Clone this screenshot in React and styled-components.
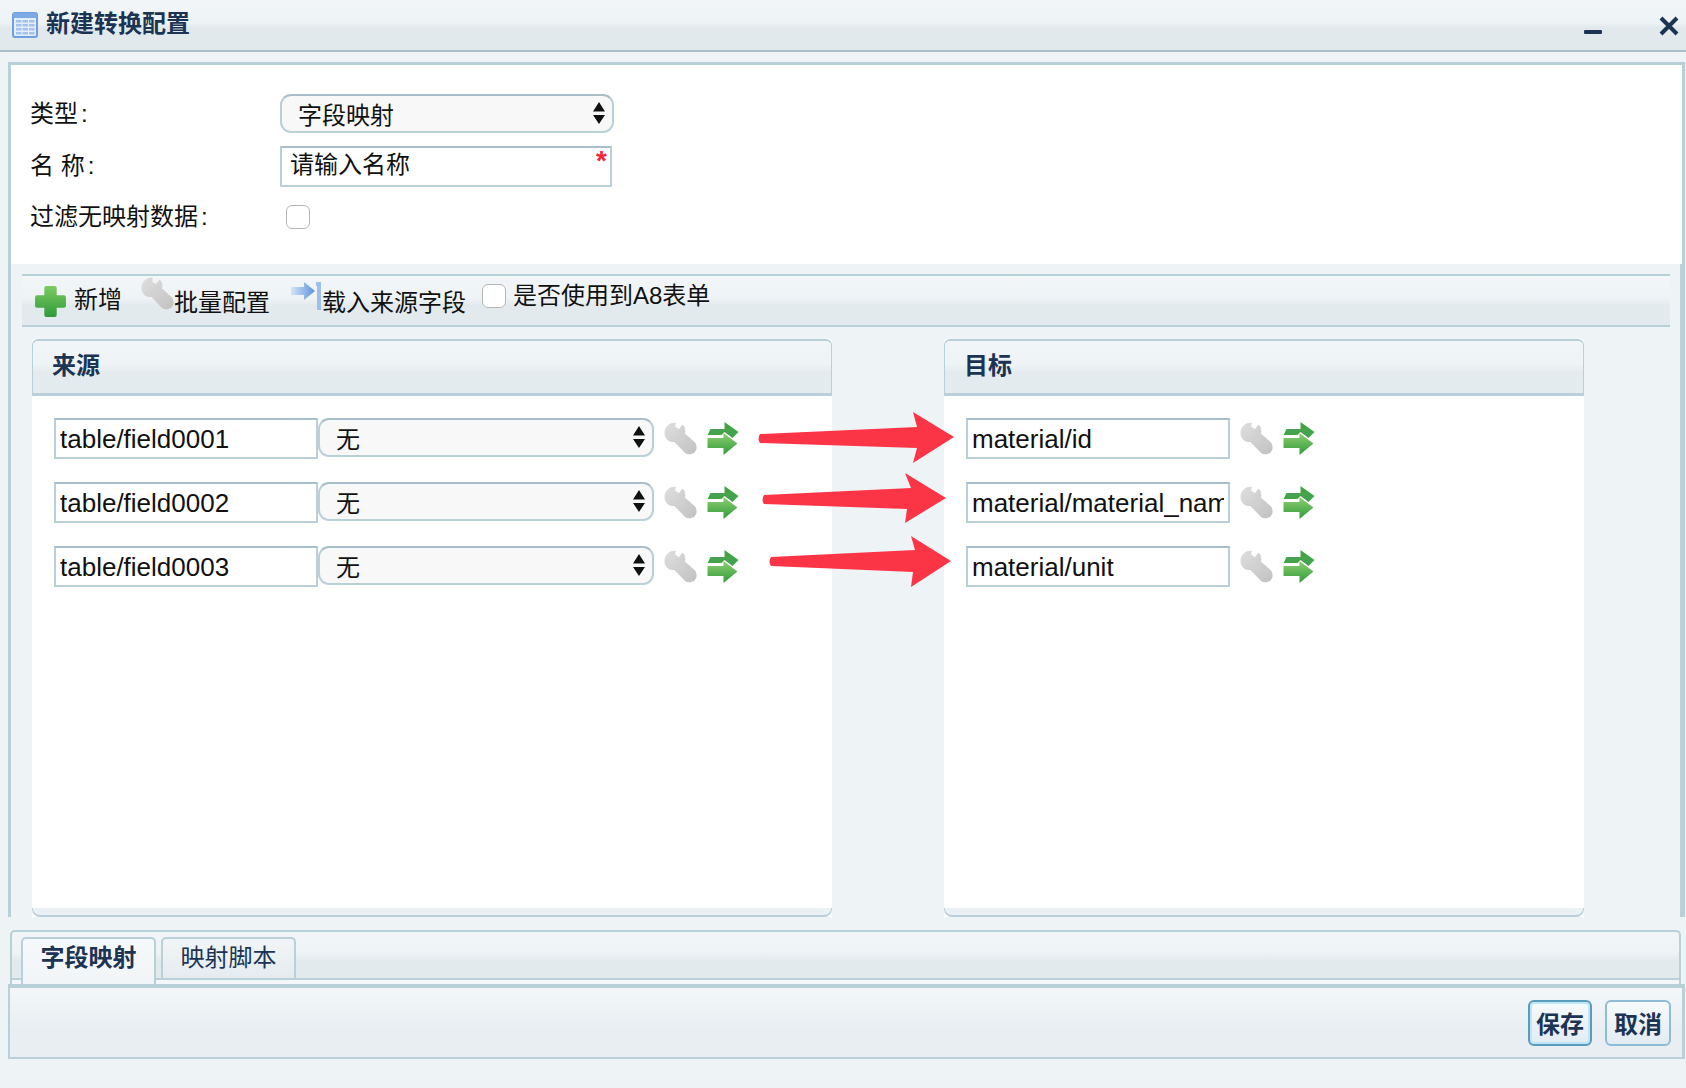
import styled, { createGlobalStyle } from 'styled-components';

const GlobalStyle = createGlobalStyle`
  html, body { margin: 0; padding: 0; background: #eef3f6; }
  * { box-sizing: border-box; }
`;

const FONT = `"Liberation Sans", "Noto Sans CJK SC", sans-serif`;
const LINE = '#b9d0d8';
const NAVY = '#1c3454';

const Window = styled.div`
  position: relative;
  width: 1686px;
  height: 1088px;
  overflow: hidden;
  background: #eef3f6;
  font-family: ${FONT};
  font-size: 24px;
  color: #111;
  display: flex;
  flex-direction: column;
`;

const TitleBar = styled.div`
  height: 52px;
  flex: none;
  display: flex;
  align-items: center;
  padding: 0 7px 0 12px;
  background: linear-gradient(#f1f5f7 0%, #eef3f5 45%, #e2e9ec 55%, #e2e9ec 100%);
  border-bottom: 2px solid #a8bfc8;
`;

const TitleText = styled.div`
  margin: 0 0 8px 8px;
  font-weight: 700;
  color: ${NAVY};
  flex: 1;
`;

const WinButton = styled.svg`
  display: block;
  flex: none;
  margin-top: 2px;
  margin-left: ${(p) => p.$gap}px;
`;

const Upper = styled.div`
  margin: 10px 1px 0 8px;
  height: 855px;
  flex: none;
  border: 3px solid ${LINE};
  border-bottom: 0;
  border-right-width: 3px;
  display: flex;
  flex-direction: column;
`;

const Form = styled.div`
  height: 199px;
  flex: none;
  background: #fff;
  padding: 29px 0 0 19px;
  display: grid;
  grid-template-columns: 250px 1fr;
  grid-template-rows: 39px 41px 33px;
  row-gap: 13px;
  align-items: center;
`;

const FormLabel = styled.div`
  line-height: 32px;
  margin-bottom: ${(p) => p.$up || 0}px;
`;

const Colon = styled.span`
  margin-left: 3px;
`;

const Dropdown = styled.div`
  width: ${(p) => p.$w}px;
  height: 39px;
  flex: none;
  display: flex;
  align-items: center;
  justify-content: space-between;
  padding: 0 7px 1px 16px;
  background: #f8f8f8;
  border: 2px solid ${LINE};
  border-top-color: #a9bec8;
  border-radius: 11px;
`;

const NameField = styled.div`
  position: relative;
  width: 332px;
  height: 41px;
  display: flex;
  align-items: center;
  padding: 0 8px 8px;
  background: #fff;
  border: 2px solid ${LINE};
  border-top-color: #a9bec8;
`;

const Required = styled.span`
  position: absolute;
  top: 1px;
  right: 3px;
  color: #f0283c;
  font-size: 28px;
  font-weight: 700;
  line-height: 24px;
`;

const CheckBox = styled.div`
  width: 24px;
  height: 24px;
  flex: none;
  margin-left: ${(p) => p.$left || 0}px;
  margin-top: ${(p) => p.$top || 0}px;
  background: #fff;
  border: 1px solid #b5b5b5;
  border-radius: 6px;
`;

const Work = styled.div`
  flex: 1;
  padding: 10px 10px 0 11px;
  display: flex;
  flex-direction: column;
  border-right: 2px solid ${LINE};
`;

const Toolbar = styled.div`
  height: 53px;
  flex: none;
  display: flex;
  align-items: flex-start;
  padding-left: 12px;
  border-top: 2px solid ${LINE};
  border-bottom: 2px solid ${LINE};
  background: linear-gradient(#f5f8f9 0, #f1f5f7 4px, #eef3f5 45%, #e3eaed 60%, #e3eaed 100%);
`;

const ToolIcon = styled.svg`
  display: block;
  flex: none;
  margin-top: ${(p) => p.$top}px;
  margin-left: ${(p) => p.$left}px;
`;

const ToolText = styled.span`
  flex: none;
  line-height: 32px;
  margin-top: ${(p) => p.$top}px;
  margin-left: ${(p) => p.$left}px;
`;

const Columns = styled.div`
  display: flex;
  gap: 112px;
  margin: 12px 0 0 10px;
`;

const Panel = styled.div`
  width: ${(p) => p.$w}px;
  height: 578px;
  flex: none;
  display: flex;
  flex-direction: column;
  background: #fff;
`;

const PanelHead = styled.div`
  height: 57px;
  flex: none;
  padding: 0 0 8px 19px;
  display: flex;
  align-items: center;
  color: ${NAVY};
  font-weight: 700;
  border: 1px solid ${LINE};
  border-top-width: 2px;
  border-bottom-width: 3px;
  border-radius: 6px 6px 0 0;
  background: linear-gradient(#f1f5f7 0%, #eef3f5 45%, #e4ebee 60%, #e4ebee 100%);
`;

const PanelBody = styled.div`
  flex: 1;
  padding: 22px 0 0 22px;
  display: flex;
  flex-direction: column;
  gap: 23px;
`;

const PanelFoot = styled.div`
  height: 9px;
  flex: none;
  background: #eaf0f3;
  border: 1px solid ${LINE};
  border-top: 0;
  border-bottom-width: 2px;
  border-radius: 0 0 8px 8px;
`;

const Row = styled.div`
  display: flex;
  align-items: flex-start;
  height: 41px;
`;

const FieldInput = styled.input`
  width: ${(p) => p.$w}px;
  height: 41px;
  flex: none;
  padding: 2px 4px 0 4px;
  margin: 0;
  font-family: ${FONT};
  font-size: 26px;
  color: #111;
  background: #fff;
  border: 2px solid ${LINE};
  border-top-color: #a9bec8;
  border-radius: 0;
  outline: none;
`;

const RowIcon = styled.svg`
  display: block;
  flex: none;
  margin-top: 4px;
  margin-left: ${(p) => p.$left}px;
`;

const ArrowMark = styled.svg`
  position: absolute;
  left: 750px;
  top: 405px;
  pointer-events: none;
`;

const TabBar = styled.div`
  margin: 13px 5px 0 10px;
  height: 54px;
  flex: none;
  display: flex;
  align-items: flex-start;
  gap: 5px;
  padding: 5px 0 0 9px;
  border: 2px solid ${LINE};
  border-bottom: 0;
  border-radius: 5px 5px 0 0;
  background: linear-gradient(#f1f5f7 0%, #eef3f5 40%, #e3eaed 55%, #e3eaed 89%, ${LINE} 89%, ${LINE} 92.6%, #f4f7f9 92.6%);
`;

const Tab = styled.div`
  width: 135px;
  height: ${(p) => (p.$active ? 47 : 41)}px;
  flex: none;
  display: flex;
  align-items: center;
  justify-content: center;
  padding-bottom: ${(p) => (p.$active ? 12 : 6)}px;
  color: ${NAVY};
  font-weight: ${(p) => (p.$active ? 700 : 400)};
  border: 2px solid ${LINE};
  border-bottom: 0;
  border-radius: 5px 5px 0 0;
  background: ${(p) =>
    p.$active ? 'linear-gradient(#f6f9fb, #f1f5f8)' : 'linear-gradient(#f1f5f7, #e5ebef)'};
`;

const Footer = styled.div`
  margin: 0 1px 0 8px;
  height: 75px;
  flex: none;
  display: flex;
  justify-content: flex-end;
  align-items: flex-start;
  gap: 13px;
  padding: 12px 11px 0 0;
  border: 2px solid ${LINE};
  border-right-width: 3px;
  border-top-width: 4px;
  background: linear-gradient(#f3f7f8, #e9eef2 60%);
`;

const ActionButton = styled.div`
  width: ${(p) => p.$w}px;
  height: 46px;
  display: flex;
  align-items: center;
  justify-content: center;
  padding-bottom: 2px;
  font-weight: 700;
  color: ${NAVY};
  border: 2px solid ${(p) => (p.$primary ? '#5b9bbd' : '#8dbcd4')};
  border-radius: 6px;
  background: linear-gradient(#f6fafc, #e2ecf2);
  box-shadow: ${(p) => (p.$primary ? 'inset 0 0 0 2px #bfe6f6' : 'none')};
`;

const TableIcon = () => (
  <svg width="26" height="26" viewBox="0 0 26 26" style={{ flex: 'none' }}>
    <rect x="1" y="1" width="24" height="24" rx="2" fill="#e4edfa" stroke="#6f9fe0" strokeWidth="2" />
    <rect x="1" y="1" width="24" height="5" fill="#7da9e6" />
    {[8, 12, 16, 20].map((y) => (
      <g key={y}>
        <rect x="4" y={y} width="5.5" height="2.5" fill="#a3c2ee" />
        <rect x="10.5" y={y} width="5.5" height="2.5" fill="#a3c2ee" />
        <rect x="17" y={y} width="5.5" height="2.5" fill="#a3c2ee" />
      </g>
    ))}
  </svg>
);

const Caret = () => (
  <svg width="12" height="24" viewBox="0 0 12 24" style={{ flex: 'none' }}>
    <path d="M6 1 L12 10.5 H0 Z M0 14 H12 L6 23 Z" fill="#111" />
  </svg>
);

const wrenchPath =
  'M11.5 0.5 C5 0.5 0.5 5 0.5 11 C0.5 17 5 20.5 10.5 20 L20 30 C22.5 33 27.5 33 30.5 30.5 C33.5 27.5 33 22.5 30.5 20 L21 11.5 C22 8 21 4.5 18.5 2.5 L15 7 L11.5 5 Z';

const Wrench = ({ as: Icon, top, left }) => (
  <Icon width="33" height="33" viewBox="0 0 33 33" $top={top} $left={left}>
    <defs>
      <linearGradient id="wrenchFill" x1="0" y1="0" x2="1" y2="1">
        <stop offset="0" stopColor="#dedede" />
        <stop offset="1" stopColor="#c2c2c2" />
      </linearGradient>
    </defs>
    <path d={wrenchPath} fill="url(#wrenchFill)" />
  </Icon>
);

const GreenArrows = ({ left }) => (
  <RowIcon width="33" height="34" viewBox="0 0 32 34" $left={left}>
    <defs>
      <linearGradient id="arrowFront" x1="0" y1="0" x2="0" y2="1">
        <stop offset="0" stopColor="#8fd070" />
        <stop offset="1" stopColor="#2f9a3a" />
      </linearGradient>
    </defs>
    <path d="M4 7 H18 V0 L32 10 L26 16 L18 10 L15 13 H1 Z" fill="#45a34c" />
    <path d="M1 16 H17 V11 L31 21.5 L17 33 V26 H1 Z" fill="url(#arrowFront)" />
  </RowIcon>
);

const fieldRows = [
  { source: 'table/field0001', target: 'material/id' },
  { source: 'table/field0002', target: 'material/material_name' },
  { source: 'table/field0003', target: 'material/unit' },
];

// red annotation arrows drawn on top of the screenshot, coords relative to the svg
const redArrows = [
  'M10 29 L167 22 L163 7 L204 32 L163 58 L167 43 L10 38 Q7 34 10 29 Z',
  'M14 90 L161 83 L155 68 L196 93 L155 118 L157 104 L14 99 Q11 95 14 90 Z',
  'M21 152 L165 145 L161 131 L201 156 L161 182 L163 167 L21 161 Q18 157 21 152 Z',
];

const App = () => {
  return (
    <Window>
      <GlobalStyle />
      <TitleBar>
        <TableIcon />
        <TitleText>新建转换配置</TitleText>
        <WinButton width="20" height="20" viewBox="0 0 20 20" $gap={0}>
          <rect x="1" y="14" width="18" height="4" rx="1" fill={NAVY} />
        </WinButton>
        <WinButton width="20" height="20" viewBox="0 0 20 20" $gap={56}>
          <path d="M2 2 L18 18 M18 2 L2 18" stroke={NAVY} strokeWidth="4" />
        </WinButton>
      </TitleBar>

      <Upper>
        <Form>
          <FormLabel>类型<Colon>:</Colon></FormLabel>
          <Dropdown $w={334}>
            字段映射
            <Caret />
          </Dropdown>
          <FormLabel $up={2}>名 称<Colon>:</Colon></FormLabel>
          <NameField>
            请输入名称
            <Required>*</Required>
          </NameField>
          <FormLabel>过滤无映射数据<Colon>:</Colon></FormLabel>
          <CheckBox $left={6} />
        </Form>

        <Work>
          <Toolbar>
            <ToolIcon width="33" height="33" viewBox="0 0 32 32" $top={9} $left={0}>
              <defs>
                <linearGradient id="plusFill" x1="0" y1="0" x2="0" y2="1">
                  <stop offset="0" stopColor="#7ccb62" />
                  <stop offset="1" stopColor="#2f9a3a" />
                </linearGradient>
              </defs>
              <path
                d="M12 1 H20 Q22 1 22 3 V10 H29 Q31 10 31 12 V20 Q31 22 29 22 H22 V29 Q22 31 20 31 H12 Q10 31 10 29 V22 H3 Q1 22 1 20 V12 Q1 10 3 10 H10 V3 Q10 1 12 1 Z"
                fill="url(#plusFill)"
              />
            </ToolIcon>
            <ToolText $top={8} $left={7}>新增</ToolText>
            <Wrench as={ToolIcon} top={1} left={19} />
            <ToolText $top={11} $left={0}>批量配置</ToolText>
            <ToolIcon width="30" height="28" viewBox="0 0 30 28" $top={6} $left={21}>
              <defs>
                <linearGradient id="loadFill" x1="0" y1="0" x2="1" y2="0">
                  <stop offset="0" stopColor="#d5e4f6" />
                  <stop offset="1" stopColor="#5b93dc" />
                </linearGradient>
              </defs>
              <path d="M0 5 H13 V0 L24 9 L13 18 V13 H0 Z" fill="url(#loadFill)" />
              <path d="M25 0 H30 V28 H26 V4 H25 Z" fill="#9dbfec" />
            </ToolIcon>
            <ToolText $top={11} $left={1}>载入来源字段</ToolText>
            <CheckBox $left={16} $top={8} />
            <ToolText $top={4} $left={7}>是否使用到A8表单</ToolText>
          </Toolbar>

          <Columns>
            <Panel $w={800}>
              <PanelHead>来源</PanelHead>
              <PanelBody>
                {fieldRows.map((row) => (
                  <Row key={row.source}>
                    <FieldInput $w={264} value={row.source} readOnly />
                    <Dropdown $w={336}>
                      无
                      <Caret />
                    </Dropdown>
                    <Wrench as={RowIcon} left={10} />
                    <GreenArrows left={9} />
                  </Row>
                ))}
              </PanelBody>
              <PanelFoot />
            </Panel>

            <Panel $w={640}>
              <PanelHead>目标</PanelHead>
              <PanelBody>
                {fieldRows.map((row) => (
                  <Row key={row.target}>
                    <FieldInput $w={264} value={row.target} readOnly />
                    <Wrench as={RowIcon} left={10} />
                    <GreenArrows left={9} />
                  </Row>
                ))}
              </PanelBody>
              <PanelFoot />
            </Panel>
          </Columns>
        </Work>
      </Upper>

      <TabBar>
        <Tab $active>字段映射</Tab>
        <Tab>映射脚本</Tab>
      </TabBar>

      <Footer>
        <ActionButton $w={64} $primary>保存</ActionButton>
        <ActionButton $w={66}>取消</ActionButton>
      </Footer>

      <ArrowMark width="210" height="190" viewBox="0 0 210 190">
        {redArrows.map((d) => (
          <path key={d} d={d} fill="#fc3546" />
        ))}
      </ArrowMark>
    </Window>
  );
};

export default App;
